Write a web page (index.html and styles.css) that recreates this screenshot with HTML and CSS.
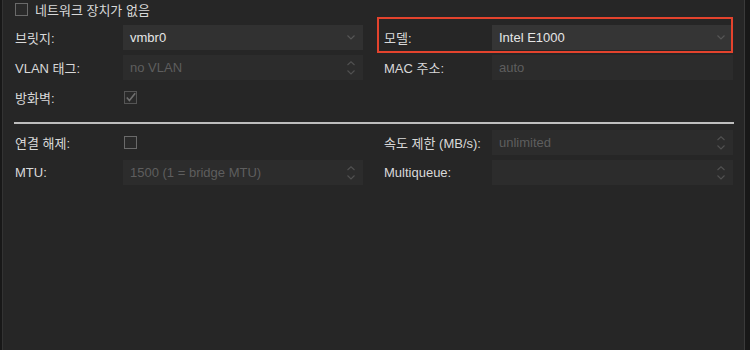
FILE: index.html
```html
<!DOCTYPE html>
<html lang="ko">
<head>
  <meta charset="UTF-8" />
  <title>네트워크 장치</title>
  <link rel="stylesheet" href="styles.css">
</head>
<body>
<div class="panel">
  <label class="nodev">
    <span class="box"></span>
    네트워크 장치가 없음
  </label>

  <div class="section">
    <div class="field">
      <span class="label">브릿지:</span>
      <div class="input">
        <span>vmbr0</span>
        <svg class="chev" width="8" height="5" viewBox="0 0 8 5"><path d="M0.5 0.5 L4 4 L7.5 0.5" /></svg>
      </div>
    </div>
    <div class="field model">
      <span class="label">모델:</span>
      <div class="input focus">
        <span>Intel E1000</span>
        <svg class="chev" width="8" height="5" viewBox="0 0 8 5"><path d="M0.5 0.5 L4 4 L7.5 0.5" /></svg>
      </div>
    </div>

    <div class="field">
      <span class="label">VLAN 태그:</span>
      <div class="input off">
        <span>no VLAN</span>
        <svg class="spin" width="8" height="14" viewBox="0 0 8 14"><path d="M0.5 4 L4 0.8 L7.5 4" /><path d="M0.5 9.5 L4 13 L7.5 9.5" /></svg>
      </div>
    </div>
    <div class="field">
      <span class="label">MAC 주소:</span>
      <div class="input off">
        <span>auto</span>
      </div>
    </div>

    <div class="field">
      <span class="label">방화벽:</span>
      <svg class="check off" width="13" height="13" viewBox="0 0 13 13">
        <rect x="0.5" y="0.5" width="12" height="12" />
        <path d="M2.8 6.4 L5.4 9.4 L11.2 2.2" />
      </svg>
    </div>
  </div>

  <div class="rule"></div>

  <div class="section">
    <div class="field">
      <span class="label">연결 해제:</span>
      <span class="box"></span>
    </div>
    <div class="field">
      <span class="label">속도 제한 (MB/s):</span>
      <div class="input off">
        <span>unlimited</span>
        <svg class="spin" width="8" height="14" viewBox="0 0 8 14"><path d="M0.5 4 L4 0.8 L7.5 4" /><path d="M0.5 9.5 L4 13 L7.5 9.5" /></svg>
      </div>
    </div>

    <div class="field">
      <span class="label">MTU:</span>
      <div class="input off">
        <span>1500 (1 = bridge MTU)</span>
        <svg class="spin" width="8" height="14" viewBox="0 0 8 14"><path d="M0.5 4 L4 0.8 L7.5 4" /><path d="M0.5 9.5 L4 13 L7.5 9.5" /></svg>
      </div>
    </div>
    <div class="field">
      <span class="label">Multiqueue:</span>
      <div class="input off">
        <span></span>
        <svg class="spin" width="8" height="14" viewBox="0 0 8 14"><path d="M0.5 4 L4 0.8 L7.5 4" /><path d="M0.5 9.5 L4 13 L7.5 9.5" /></svg>
      </div>
    </div>
  </div>
</div>
</body>
</html>
```

FILE: styles.css
```css
body {
  margin: 0;
  background-color: #181818;
  font-family: "Liberation Sans", "Noto Sans CJK KR", sans-serif;
  font-size: 13px;
  color: #d9d9d9;
}
.panel {
  box-sizing: border-box;
  width: 743px;
  height: 350px;
  margin-left: 2px;
  padding: 0 11px 0 12px;
  background: #262626;
  border-left: 1px solid #333333;
  border-right: 1px solid #3a3a3a;
}
.nodev {
  display: flex;
  align-items: center;
  gap: 7px;
  height: 17px;
  padding-top: 1px;
  margin-bottom: 7px;
}
.box {
  box-sizing: border-box;
  width: 13px;
  height: 13px;
  border: 1px solid #6a6a6a;
  background: #2a2a2a;
}
.section {
  display: grid;
  grid-template-columns: 348px 349px;
  column-gap: 21px;
  row-gap: 5px;
}
.field {
  display: grid;
  grid-template-columns: 108px 1fr;
  align-items: center;
  height: 25px;
}
.field .box {
  margin-left: 1px;
}
.input {
  display: flex;
  align-items: center;
  justify-content: space-between;
  height: 25px;
  padding: 0 8px 0 7px;
  background: #313131;
  color: #e6e6e6;
}
.input.focus {
  background: #353535;
}
.input.off {
  background: #2c2c2c;
  color: #5e5e5e;
}
.chev path,
.spin path {
  fill: none;
  stroke: #555555;
  stroke-width: 1.2;
}
.off .spin path {
  stroke: #505050;
}
.check {
  margin-left: 1px;
}
.check rect {
  fill: #2a2a2a;
  stroke: #555555;
}
.check path {
  fill: none;
  stroke: #707070;
  stroke-width: 1.6;
}
.model {
  position: relative;
}
.model::after {
  content: "";
  position: absolute;
  left: -7px;
  top: -8px;
  right: 0;
  bottom: -3px;
  border: 2px solid #e4432d;
  pointer-events: none;
}
.rule {
  height: 2px;
  margin: 12px -1px 6px -1px;
  background: #bdbdbd;
}
```
